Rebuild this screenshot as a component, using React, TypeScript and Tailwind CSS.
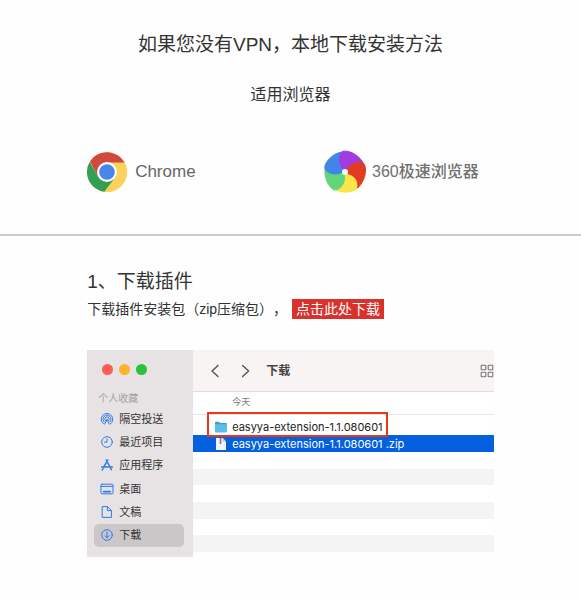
import type { ReactNode } from "react"

const browserPetals = [
    { color: "#f9e547", angle: 72 },
    { color: "#5fd67c", angle: 144 },
    { color: "#4285e8", angle: 216 },
    { color: "#a13ce0", angle: 288 },
    { color: "#e23b24", angle: 0 },
]

function ChromeLogo() {
    return (
        <svg viewBox="0 0 48 48" className="size-10 shrink-0" aria-hidden="true">
            <circle cx="24" cy="24" r="24" fill="#fbd25b" />
            <path d="M24 24 L13.6 30 L3.2 12 A24 24 0 0 0 21 47.8 L34.4 30 Z" fill="#31a055" />
            <path d="M24 24 L13.6 30 L3.6 11.4 A24 24 0 0 1 45 13 L24 13 Z" fill="#d24a3e" />
            <path d="M24 13 H45 A24 24 0 0 1 21 47.8 L34.4 30 Z" fill="#fbd25b" />
            <circle cx="24" cy="24" r="12" fill="#fff" />
            <circle cx="24" cy="24" r="9.4" fill="#4a86e8" />
        </svg>
    )
}

function SpeedBrowserLogo() {
    return (
        <svg viewBox="-66 -66 132 132" className="size-11 shrink-0" aria-hidden="true">
            {browserPetals.map((petal) => (
                <path
                    key={petal.color}
                    transform={`rotate(${petal.angle})`}
                    d="M4 0 C10 -18 28 -32 50 -29 C68 -24 66 22 38 48 C42 26 28 8 4 4 Z"
                    fill={petal.color}
                    stroke={petal.color}
                    strokeWidth="3"
                    strokeLinejoin="round"
                />
            ))}
            <circle r="9" fill="#fff" />
        </svg>
    )
}

function SideIcon({ children }: { children: ReactNode }) {
    return (
        <svg viewBox="0 0 14 14" className="size-[14px] shrink-0" fill="none" stroke="#2f7bea" strokeLinecap="round" strokeLinejoin="round" aria-hidden="true">
            {children}
        </svg>
    )
}

const places = [
    {
        name: "隔空投送",
        icon: <SideIcon>
            <path d="M3.6 12 A5.8 5.8 0 1 1 10.4 12" />
            <path d="M4.2 10 A4 4 0 1 1 9.8 10" />
            <path d="M5.4 8.6 A2.2 2.2 0 1 1 8.6 8.6" />
            <path d="M7 7.6 L4.8 12 M7 7.6 L9.2 12" />
        </SideIcon>,
    },
    {
        name: "最近项目",
        icon: <SideIcon><circle cx="7" cy="7" r="5.3" /><path d="M7 3.8 V7.2 H4.4" /></SideIcon>,
    },
    {
        name: "应用程序",
        icon: <SideIcon><path strokeWidth="1.5" d="M6.2 2 L11.4 11.6 M7.8 2 L3.4 9.6 M1.6 9 H8.4 M10.6 9 H12.4 M2.8 11 L2.2 12" /></SideIcon>,
    },
    {
        name: "桌面",
        icon: <SideIcon><rect x="1" y="2.2" width="12" height="9.6" rx="1" /><path d="M1 4.4 H13" /><path strokeWidth="1.6" d="M3.6 9.6 H10.4" /></SideIcon>,
    },
    {
        name: "文稿",
        icon: <SideIcon><path d="M2.6 1.6 H7.4 L11.4 5.6 V12.4 H2.6 Z M7.4 1.6 V5.6 H11.4" /></SideIcon>,
    },
    {
        name: "下载",
        icon: <SideIcon><circle cx="7" cy="7" r="5.3" /><path d="M7 4 V9.6 M4.9 7.7 L7 9.8 L9.1 7.7" /></SideIcon>,
    },
]

function FolderIcon() {
    return (
        <svg viewBox="0 0 14 14" className="size-[14px] shrink-0" aria-hidden="true">
            <path d="M1 2.6 Q1 1.8 1.8 1.8 H5 L6.2 3 H12.2 Q13 3 13 3.8 V6 H1 Z" fill="#3f9fcf" />
            <rect x="1" y="4.2" width="12" height="8.2" rx="0.8" fill="#5cbdea" />
        </svg>
    )
}

function ZipIcon() {
    return (
        <svg viewBox="0 0 14 14" className="size-[14px] shrink-0" aria-hidden="true">
            <path d="M2 1 H8.6 L12 4.4 V13 H2 Z" fill="#f4f4f8" />
            <path d="M8.6 1 V4.4 H12 Z" fill="#c3c8d6" />
            <path d="M6.5 1 V7" stroke="#7c7a88" strokeWidth="1.6" />
        </svg>
    )
}

function FinderWindow() {
    return (
        <div className="mt-[31px] flex h-[207px] overflow-hidden text-[11px] leading-4">
            <nav className="flex w-[26%] min-w-[106px] flex-col bg-[#e7e2e3] px-[7px] pt-[14px] pb-[10px]" aria-label="个人收藏">
                <div className="flex gap-[6px] px-2">
                    <span className="size-[11px] rounded-full bg-[#fc5b57]" />
                    <span className="size-[11px] rounded-full bg-[#fdb429]" />
                    <span className="size-[11px] rounded-full bg-[#28c33c]" />
                </div>
                <p className="mt-[18px] px-1 text-[10px] leading-3 text-[#a39fa0]">个人收藏</p>
                <ul className="mt-[2px] flex flex-1 flex-col">
                    {places.map((place) => (
                        <li key={place.name} className="flex flex-1">
                            <button type="button" className={place.name === "下载" ? "mr-[2px] flex flex-1 items-center gap-[5px] rounded-[5px] bg-[#cbc7c8] px-[6px] text-[#333]" : "mr-[2px] flex flex-1 items-center gap-[5px] px-[6px] text-[#333]"}>
                                {place.icon}
                                {place.name}
                            </button>
                        </li>
                    ))}
                </ul>
            </nav>
            <div className="min-w-0 flex-1 bg-white">
                <div className="flex h-[42px] items-center border-b border-[#dfdcdc] bg-[#f9f4f4] pl-[15px]">
                    <button type="button" aria-label="后退">
                        <svg viewBox="0 0 14 14" className="size-[14px]" fill="none" stroke="#555" strokeWidth="1.4" strokeLinecap="round" strokeLinejoin="round"><path d="M10 1.4 L4 7 L10 12.6" /></svg>
                    </button>
                    <button type="button" aria-label="前进" className="ml-4">
                        <svg viewBox="0 0 14 14" className="size-[14px]" fill="none" stroke="#555" strokeWidth="1.4" strokeLinecap="round" strokeLinejoin="round"><path d="M4.6 1.4 L10.6 7 L4.6 12.6" /></svg>
                    </button>
                    <h3 className="ml-[14px] text-[12px] font-bold text-[#444]">下载</h3>
                    <button type="button" aria-label="图标视图" className="ml-auto">
                        <svg viewBox="0 0 14 14" className="size-[14px]" fill="none" stroke="#777" strokeWidth="1.1">
                            <rect x="1.2" y="1.2" width="4.6" height="4.6" rx="0.6" />
                            <rect x="8.2" y="1.2" width="4.6" height="4.6" rx="0.6" />
                            <rect x="1.2" y="8.2" width="4.6" height="4.6" rx="0.6" />
                            <rect x="8.2" y="8.2" width="4.6" height="4.6" rx="0.6" />
                        </svg>
                    </button>
                </div>
                <p className="h-[23px] border-b border-[#e6e6e6] pl-[39px] text-[9px] leading-5 text-[#777]">今天</p>
                <ul className="font-['Inter','Noto_Sans_CJK_SC',sans-serif]">
                    <li className="relative flex h-5 items-center gap-1 pt-1 pl-[21px] text-[#222]">
                        <FolderIcon />
                        easyya-extension-1.1.080601
                        <span className="absolute -top-[3px] left-[14px] h-[25px] w-[181px] border-2 border-[#e8371f]" />
                    </li>
                    <li className="flex h-[17px] items-center gap-1 bg-[#0460de] pl-[21px] text-white">
                        <ZipIcon />
                        easyya-extension-1.1.080601 .zip
                    </li>
                </ul>
                <div className="grid h-[100px] grid-rows-6">
                    <div />
                    <div className="bg-[#f4f4f4]" />
                    <div />
                    <div className="bg-[#f4f4f4]" />
                    <div />
                    <div className="bg-[#f4f4f4]" />
                </div>
            </div>
        </div>
    )
}

export default function App() {
    return (
        <main className="min-h-screen bg-[#fefefe] font-['Liberation_Sans','Noto_Sans_CJK_SC',sans-serif] text-[#333] [text-spacing-trim:space-all]">
            <section className="border-b-2 border-[#cbcbcb] px-[15%] pt-[31px] pb-10">
                <h1 className="text-center text-[19px] leading-7">如果您没有VPN，本地下载安装方法</h1>
                <h2 className="mt-6 text-center text-[16px] leading-6">适用浏览器</h2>
                <div className="mt-[43px] grid grid-cols-[58%_42%] text-[#666]">
                    <div className="flex items-center gap-2 text-[17px] leading-6">
                        <ChromeLogo />
                        Chrome
                    </div>
                    <div className="flex items-center gap-[5px] text-[16px] leading-6 font-medium whitespace-nowrap text-[#707070]">
                        <SpeedBrowserLogo />
                        360极速浏览器
                    </div>
                </div>
            </section>
            <section className="px-[15%] pt-8">
                <h2 className="text-[19px] leading-7">1、下载插件</h2>
                <p className="mt-[3px] text-[14px] leading-5">
                    下载插件安装包（zip压缩包），
                    <a href="#download" className="ml-[5px] inline-block bg-[#d9322d] px-1 text-white">点击此处下载</a>
                </p>
                <FinderWindow />
            </section>
        </main>
    )
}
